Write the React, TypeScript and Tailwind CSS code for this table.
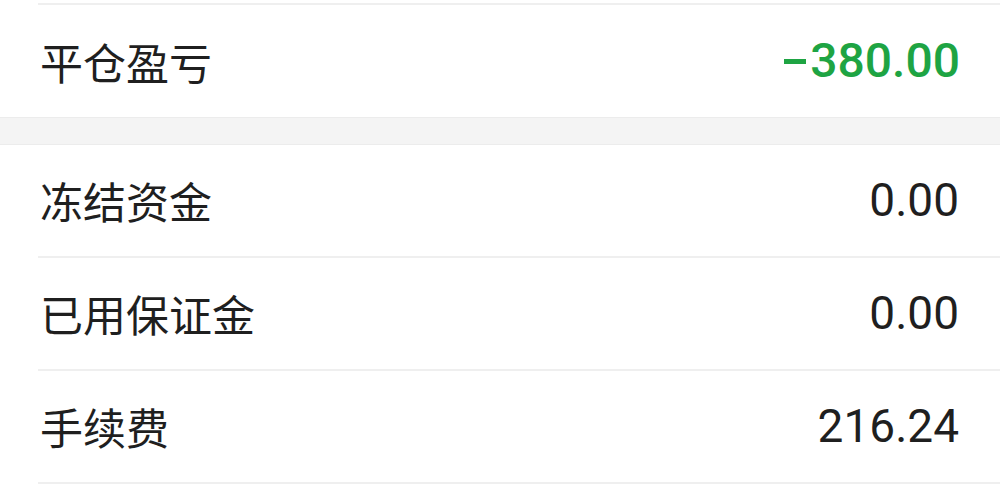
const ROWS = [
  { label: '冻结资金', value: '0.00' },
  { label: '已用保证金', value: '0.00' },
  { label: '手续费', value: '216.24' },
];

function Row({ label, value }: { label: string; value: string }) {
  return (
    <div className="ml-[38px] flex h-[113px] items-center justify-between border-b-2 border-[#efefef] pl-[2px] pr-[41px]">
      <span className="text-[43px] text-[#1f1f1f]">{label}</span>
      <span className="font-['Roboto',sans-serif] text-[46px] text-[#1f1f1f]">{value}</span>
    </div>
  );
}

export default function App() {
  return (
    <div
      className="h-[484px] w-[1000px] overflow-hidden bg-white"
      style={{ fontFamily: '"Noto Sans CJK SC", "Noto Sans", sans-serif' }}
    >
      <div className="ml-[38px] h-[5px] border-b-2 border-[#efefef]" />
      <div className="flex h-[112px] items-center justify-between pl-[40px] pr-[40px]">
        <span className="text-[43px] text-[#1f1f1f]">平仓盈亏</span>
        <span className="flex items-center gap-[4px] font-['Roboto',sans-serif] text-[48px] font-medium text-[#1ea443]">
          <span className="inline-block h-[5px] w-[22px] bg-[#1ea443]" />
          380.00
        </span>
      </div>
      <div className="h-[28px] border-y border-[#ececec] bg-[#f4f4f4]" />
      {ROWS.map((r) => (
        <Row key={r.label} label={r.label} value={r.value} />
      ))}
    </div>
  );
}
